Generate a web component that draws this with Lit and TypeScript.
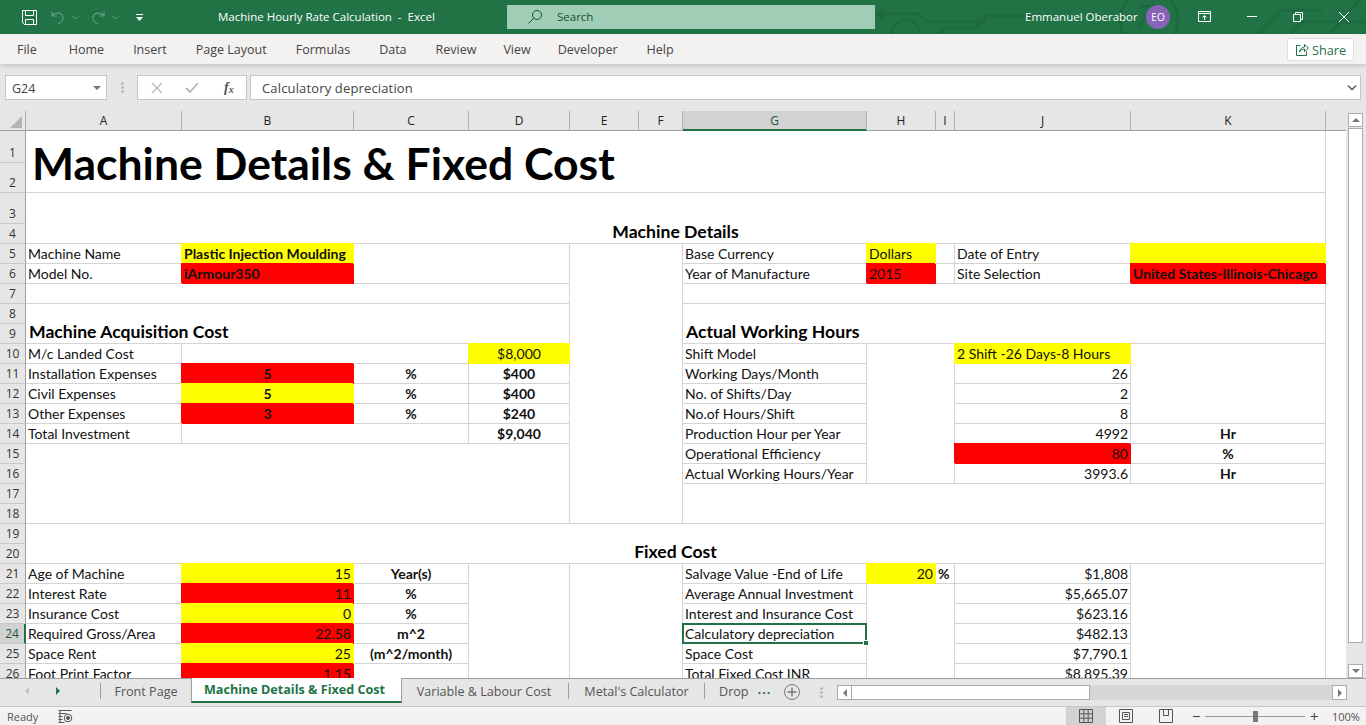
import { LitElement, css, html, svg } from "lit";
import { customElement } from "lit/decorators.js";

const COLS = ["A", "B", "C", "D", "E", "F", "G", "H", "I", "J", "K"];
const COL_W = [156, 172, 115, 101, 69, 44, 184, 69, 19, 176, 195];
const ROW_H = [32, 30, 31, ...Array(23).fill(20)];

type Cell = { at: string; to?: string; text?: string; cls?: string };

// same reading as a spreadsheet: at = top left, to = bottom right of the merge
const CELLS: Cell[] = [
  { at: "A1", to: "K2", text: "Machine Details & Fixed Cost", cls: "title" },
  { at: "A3", to: "K4", text: "Machine Details", cls: "head ctr" },

  { at: "A5", text: "Machine Name" },
  { at: "B5", text: "Plastic Injection Moulding", cls: "b yellow" },
  { at: "A6", text: "Model No." },
  { at: "B6", text: "iArmour350", cls: "b red" },
  { at: "C5", to: "D6" },
  { at: "E5", to: "F18" },
  { at: "A7", to: "D7" },
  { at: "A8", to: "D9", text: "Machine Acquisition Cost", cls: "head ind" },
  { at: "A10", text: "M/c Landed Cost" },
  { at: "B10", to: "C10" },
  { at: "D10", text: "$8,000", cls: "ctr yellow" },
  { at: "A11", text: "Installation Expenses" },
  { at: "B11", text: "5", cls: "b ctr red" },
  { at: "C11", text: "%", cls: "b ctr" },
  { at: "D11", text: "$400", cls: "b ctr" },
  { at: "A12", text: "Civil Expenses" },
  { at: "B12", text: "5", cls: "b ctr yellow" },
  { at: "C12", text: "%", cls: "b ctr" },
  { at: "D12", text: "$400", cls: "b ctr" },
  { at: "A13", text: "Other Expenses" },
  { at: "B13", text: "3", cls: "b ctr red" },
  { at: "C13", text: "%", cls: "b ctr" },
  { at: "D13", text: "$240", cls: "b ctr" },
  { at: "A14", text: "Total Investment" },
  { at: "B14", to: "C14" },
  { at: "D14", text: "$9,040", cls: "b ctr" },
  { at: "A15", to: "D18" },

  { at: "G5", text: "Base Currency" },
  { at: "H5", text: "Dollars", cls: "yellow" },
  { at: "I5" },
  { at: "J5", text: "Date of Entry" },
  { at: "K5", cls: "yellow" },
  { at: "G6", text: "Year of Manufacture" },
  { at: "H6", text: "2015", cls: "red" },
  { at: "I6" },
  { at: "J6", text: "Site Selection" },
  { at: "K6", text: "United States-Illinois-Chicago", cls: "b red" },
  { at: "G7", to: "K7" },
  { at: "G8", to: "K9", text: "Actual Working Hours", cls: "head ind" },
  { at: "G10", text: "Shift Model" },
  { at: "H10", to: "I16" },
  { at: "J10", text: "2 Shift -26 Days-8 Hours", cls: "yellow" },
  { at: "K10", to: "K13" },
  { at: "G11", text: "Working Days/Month" },
  { at: "J11", text: "26", cls: "rgt" },
  { at: "G12", text: "No. of Shifts/Day" },
  { at: "J12", text: "2", cls: "rgt" },
  { at: "G13", text: "No.of Hours/Shift" },
  { at: "J13", text: "8", cls: "rgt" },
  { at: "G14", text: "Production Hour per Year" },
  { at: "J14", text: "4992", cls: "rgt" },
  { at: "K14", text: "Hr", cls: "b ctr" },
  { at: "G15", text: "Operational Efficiency" },
  { at: "J15", text: "80", cls: "rgt red" },
  { at: "K15", text: "%", cls: "b ctr" },
  { at: "G16", text: "Actual Working Hours/Year" },
  { at: "J16", text: "3993.6", cls: "rgt" },
  { at: "K16", text: "Hr", cls: "b ctr" },
  { at: "G17", to: "K18" },

  { at: "A19", to: "K20", text: "Fixed Cost", cls: "head ctr" },
  { at: "A21", text: "Age of Machine" },
  { at: "B21", text: "15", cls: "rgt yellow" },
  { at: "C21", text: "Year(s)", cls: "b ctr" },
  { at: "D21", to: "D26" },
  { at: "E21", to: "F26" },
  { at: "A22", text: "Interest Rate" },
  { at: "B22", text: "11", cls: "rgt red" },
  { at: "C22", text: "%", cls: "b ctr" },
  { at: "A23", text: "Insurance Cost" },
  { at: "B23", text: "0", cls: "rgt yellow" },
  { at: "C23", text: "%", cls: "b ctr" },
  { at: "A24", text: "Required Gross/Area" },
  { at: "B24", text: "22.58", cls: "rgt red" },
  { at: "C24", text: "m^2", cls: "b ctr" },
  { at: "A25", text: "Space Rent" },
  { at: "B25", text: "25", cls: "rgt yellow" },
  { at: "C25", text: "(m^2/month)", cls: "b ctr" },
  { at: "A26", text: "Foot Print Factor" },
  { at: "B26", text: "1.15", cls: "rgt red" },
  { at: "C26" },

  { at: "G21", text: "Salvage Value -End of Life" },
  { at: "H21", text: "20", cls: "rgt yellow" },
  { at: "I21", text: "%", cls: "b" },
  { at: "J21", text: "$1,808", cls: "rgt" },
  { at: "K21", to: "K26" },
  { at: "G22", text: "Average Annual Investment" },
  { at: "H22", to: "I26" },
  { at: "J22", text: "$5,665.07", cls: "rgt" },
  { at: "G23", text: "Interest and Insurance Cost" },
  { at: "J23", text: "$623.16", cls: "rgt" },
  { at: "G24", text: "Calculatory depreciation", cls: "sel" },
  { at: "J24", text: "$482.13", cls: "rgt" },
  { at: "G25", text: "Space Cost" },
  { at: "J25", text: "$7,790.1", cls: "rgt" },
  { at: "G26", text: "Total Fixed Cost INR" },
  { at: "J26", text: "$8,895.39", cls: "rgt" },
];

const TABS = ["File", "Home", "Insert", "Page Layout", "Formulas", "Data", "Review", "View", "Developer", "Help"];

function parse(ref: string) {
  return { col: COLS.indexOf(ref[0]) + 2, row: Number(ref.slice(1)) + 1 };
}

function place(c: Cell) {
  const a = parse(c.at);
  const b = parse(c.to ?? c.at);
  return `grid-area:${a.row}/${a.col}/${b.row + 1}/${b.col + 1}`;
}

const circuit = svg`
  <g fill="none" stroke="#1d6a3f" stroke-width="3">
    <circle cx="1149" cy="20" r="29"/>
    <path d="M1141 6h14v14M1155 6l-16 20"/>
    <path d="M875 14h44l8 8h60M892 34a14 14 0 0 1 28 0M940 34l5-6h30l12-12h50"/>
    <circle cx="882" cy="14" r="3"/>
    <path d="M1258 34l24-24h40M1330 34l30-34M1290 34l12-12h64"/>
  </g>`;

@customElement("app-root")
export class AppRoot extends LitElement {
  render() {
    const gridCols = `26px ${COL_W.map((w) => w + "px").join(" ")} 20px`;
    const gridRows = `20px ${ROW_H.map((h) => h + "px").join(" ")}`;
    return html`
      <header class="titlebar">
        <svg class="circuit" width="1366" height="34" viewBox="0 0 1366 34">${circuit}</svg>
        <div class="qat">
          <svg width="17" height="17" viewBox="0 0 17 17" fill="none" stroke="#fff">
            <path d="M1.500 1.500h14v14h-12l-2-2z"/><path d="M4.500 1.500v5h8v-5M4.500 15.500v-5h8v5"/>
          </svg>
          <svg class="undo" width="16" height="16" viewBox="0 0 16 16" fill="none" stroke="#5d9e7c" stroke-width="1.200">
            <path d="M2 2v5h5M2 7c3-4 10-4 11 1 .6 3-2 6-5 7"/>
          </svg>
          <svg class="chev" width="7" height="5" viewBox="0 0 7 5" fill="none" stroke="#5d9e7c"><path d="M.5 1l3 3 3-3"/></svg>
          <svg class="redo" width="16" height="16" viewBox="0 0 16 16" fill="none" stroke="#5d9e7c" stroke-width="1.200">
            <path d="M14 2v5H9M14 7c-3-4-10-4-11 1-.6 3 2 6 5 7"/>
          </svg>
          <svg class="chev" width="7" height="5" viewBox="0 0 7 5" fill="none" stroke="#5d9e7c"><path d="M.5 1l3 3 3-3"/></svg>
          <svg class="more" width="9" height="9" viewBox="0 0 9 9" fill="#fff">
            <rect x="1" y="1" width="7" height="1"/><path d="M1 4h7L4.500 8z"/>
          </svg>
        </div>
        <div class="doc">Machine Hourly Rate Calculation&nbsp; -&nbsp; Excel</div>
        <div class="search">
          <svg width="16" height="16" viewBox="0 0 16 16" fill="none" stroke="#14532f">
            <circle cx="10" cy="6" r="4.500"/><path d="M6.700 9.300L1.500 14.500"/>
          </svg>
          <span>Search</span>
        </div>
        <div class="user">Emmanuel Oberabor</div>
        <div class="avatar">EO</div>
        <div class="win">
          <svg width="14" height="12" viewBox="0 0 14 12" fill="none" stroke="#fff">
            <path d="M.5 .5h12v10H.5zM.5 2.500h12M6.500 9V4.500M4.500 6.500l2-2 2 2"/>
          </svg>
          <svg width="12" height="12" viewBox="0 0 12 12" stroke="#fff"><path d="M1 5.500h10"/></svg>
          <svg width="12" height="12" viewBox="0 0 12 12" fill="none" stroke="#fff">
            <path d="M1.500 3.500h7v7h-7zM3.500 3.500v-2h7v7h-2"/>
          </svg>
          <svg width="12" height="12" viewBox="0 0 12 12" stroke="#fff"><path d="M1 1l10 10M11 1L1 11"/></svg>
        </div>
      </header>

      <nav class="ribbon">
        ${TABS.map((t) => html`<span>${t}</span>`)}
        <button class="share">
          <svg width="14" height="14" viewBox="0 0 14 14" fill="none" stroke="#217346">
            <path d="M5.500 2.500h-4v10h10v-4M4.500 9c0-3 3-5 5-5V1.500l4 3.500-4 3.500V6c-2 0-4 1-5 3z"/>
          </svg>
          Share
        </button>
      </nav>

      <section class="formula">
        <div class="namebox"><span>G24</span><i class="caret"></i></div>
        <div class="grip"></div>
        <div class="fxbtns">
          <svg width="12" height="12" viewBox="0 0 12 12" stroke="#b4b4b4" stroke-width="1.300"><path d="M1 1l10 10M11 1L1 11"/></svg>
          <svg width="14" height="12" viewBox="0 0 14 12" fill="none" stroke="#b4b4b4" stroke-width="1.800"><path d="M1 6l4 4 8-9"/></svg>
          <span class="fx">f<sub>x</sub></span>
        </div>
        <div class="input">
          <span>Calculatory depreciation</span>
          <svg width="10" height="8" viewBox="0 0 10 8" fill="none" stroke="#6a6a6a" stroke-width="1.600"><path d="M1 1.500l4 4 4-4"/></svg>
        </div>
      </section>

      <section class="sheet">
        <div class="grid" style="grid-template-columns:${gridCols};grid-template-rows:${gridRows}">
          <div class="corner"><i></i></div>
          ${COLS.map((c) => html`<div class="colhead ${c === "G" ? "on" : ""}">${c}</div>`)}
          <div class="colhead end"></div>
          ${ROW_H.map(
            (_, i) => html`<div class="rowhead ${i === 23 ? "on" : ""}" style="grid-area:${i + 2}/1">${i + 1}</div>`
          )}
          ${CELLS.map(
            (c) => html`<div class="cell ${c.cls ?? ""}" style=${place(c)}>${c.text ?? ""}</div>`
          )}
        </div>
        <aside class="vscroll">
          <div class="btn"><i class="up"></i></div>
          <div class="thumb"></div>
          <div class="track"></div>
          <div class="btn"><i class="down"></i></div>
        </aside>
      </section>

      <section class="tabs">
        <div class="arrows">
          <i class="prev"></i>
          <i class="next"></i>
        </div>
        <div class="tab" style="width:91px">Front Page</div>
        <div class="tab active" style="width:211px">Machine Details &amp; Fixed Cost</div>
        <div class="tab" style="width:166px">Variable &amp; Labour Cost</div>
        <div class="tab" style="width:136px">Metal's Calculator</div>
        <div class="tab last">Drop</div>
        <span class="ell">...</span>
        <svg class="add" width="18" height="18" viewBox="0 0 18 18" fill="none" stroke="#777">
          <circle cx="9" cy="9" r="7.500"/><path d="M9 4.500v9M4.500 9h9" stroke-width="1.500"/>
        </svg>
        <div class="grip small"></div>
        <div class="hscroll">
          <div class="btn"><i class="left"></i></div>
          <div class="hthumb"></div>
          <div class="htrack"></div>
          <div class="btn"><i class="right"></i></div>
        </div>
      </section>

      <footer class="status">
        <span class="ready">Ready</span>
        <svg class="macro" width="15" height="13" viewBox="0 0 15 13" fill="none" stroke="#555">
          <path d="M.5 .5h13M.5 3.500h8M.5 6.500h4M.5 9.500h4M.5 12.500h6M2 .5v12"/><circle cx="10" cy="8" r="3.800"/><circle cx="10" cy="8" r="1.500" fill="#555"/>
        </svg>
        <div class="spring"></div>
        <div class="view on">
          <svg width="14" height="14" viewBox="0 0 14 14" fill="none" stroke="#555">
            <path d="M.5 .5h13v13H.5zM.5 4.830h13M.5 9.170h13M4.830 .5v13M9.170 .5v13"/>
          </svg>
        </div>
        <div class="view">
          <svg width="14" height="14" viewBox="0 0 14 14" fill="none" stroke="#555">
            <path d="M.5 .5h13v13H.5zM3.500 3.500h7v7h-7zM5 5.500h4M5 7.500h4"/>
          </svg>
        </div>
        <div class="view">
          <svg width="14" height="14" viewBox="0 0 14 14" fill="none" stroke="#555">
            <path d="M.5 .5h13v13H.5zM4.500 .5v6h5v-6"/>
          </svg>
        </div>
        <div class="zoom">
          <span class="pm">−</span>
          <div class="slider"><i></i></div>
          <span class="pm">+</span>
          <span class="pct">100%</span>
        </div>
      </footer>
    `;
  }

  static styles = css`
    :host {
      display: flex;
      flex-direction: column;
      height: 100vh;
      overflow: hidden;
      font-family: "Open Sans", "Noto Sans", sans-serif;
      background: #e6e6e6;
    }

    .titlebar {
      position: relative;
      height: 34px;
      flex: none;
      display: flex;
      align-items: center;
      background: #217346;
      color: #fff;
      font-size: 11.500px;
    }
    .circuit {
      position: absolute;
      left: 0;
      top: 0;
    }
    .qat {
      position: relative;
      width: 218px;
      flex: none;
      padding-left: 21px;
      box-sizing: border-box;
      display: flex;
      align-items: center;
    }
    .qat .undo {
      margin-left: 12px;
    }
    .qat .redo {
      margin-left: 11px;
    }
    .chev {
      margin-left: 6px;
    }
    .qat .more {
      margin-left: 16px;
    }
    .doc {
      position: relative;
      width: 289px;
      flex: none;
      white-space: nowrap;
      margin-top: -2px;
    }
    .search {
      position: relative;
      width: 368px;
      height: 24px;
      flex: none;
      box-sizing: border-box;
      padding-left: 20px;
      display: flex;
      align-items: center;
      gap: 14px;
      background: #a0cdb5;
      color: #14532f;
    }
    .search span {
      margin-top: -1px;
    }
    .user {
      position: relative;
      margin-left: 150px;
      width: 121px;
      flex: none;
      white-space: nowrap;
      margin-top: -1px;
    }
    .avatar {
      position: relative;
      width: 24px;
      height: 24px;
      flex: none;
      border-radius: 50%;
      background: #8764b8;
      display: grid;
      place-items: center;
      font-size: 10px;
    }
    .win {
      position: relative;
      display: flex;
      align-items: center;
      margin-left: 28px;
      gap: 34px;
    }

    .ribbon {
      height: 30px;
      flex: none;
      display: flex;
      align-items: center;
      gap: 29px;
      padding-left: 17px;
      background: #f3f2f1;
      color: #444;
      font-size: 12.500px;
      box-shadow: 0 2px 4px rgba(0, 0, 0, 0.14);
      position: relative;
      z-index: 1;
    }
    .ribbon span:first-child {
      margin-right: 3px;
    }
    .ribbon span:nth-child(8),
    .ribbon span:nth-child(9) {
      margin-left: -2px;
    }
    .share {
      position: absolute;
      left: 1287px;
      top: 4px;
      width: 67px;
      height: 23px;
      box-sizing: border-box;
      display: flex;
      align-items: center;
      justify-content: center;
      gap: 3px;
      background: #fff;
      border: 1px solid #e1dfdd;
      border-radius: 2px;
      padding: 0;
      color: #217346;
      font: 400 12.700px "Open Sans", sans-serif;
    }

    .formula {
      height: 47px;
      flex: none;
      box-sizing: border-box;
      padding: 11px 5px 11px;
      display: flex;
      background: #e6e6e6;
    }
    .namebox,
    .fxbtns,
    .input {
      box-sizing: border-box;
      height: 25px;
      background: #fff;
      border: 1px solid #c6c6c6;
      display: flex;
      align-items: center;
      color: #444;
      font-size: 13px;
    }
    .namebox span {
      margin-top: 2px;
    }
    .namebox {
      width: 102px;
      padding: 0 5px 0 6px;
      justify-content: space-between;
      font-size: 12.500px;
    }
    .caret {
      border: 4px solid transparent;
      border-top: 4px solid #777;
      border-bottom: 0;
    }
    .grip {
      width: 30px;
      background: radial-gradient(circle, #a6a6a6 1px, transparent 1.300px) center / 3px 4px repeat-y;
      height: 13px;
      margin-top: 6px;
    }
    .grip.small {
      width: 3px;
      margin: 0 14px 0 19px;
    }
    .fxbtns {
      width: 110px;
      padding-left: 13px;
      gap: 22px;
      flex: none;
    }
    .fx {
      font: italic 700 14px "Liberation Serif", serif;
      color: #555;
      margin-left: 3px;
    }
    .fx sub {
      font-size: 10px;
      vertical-align: -1px;
    }
    .input {
      flex: 1;
      margin-left: 3px;
      padding: 0 3px 0 11px;
      justify-content: space-between;
      letter-spacing: 0.150px;
    }

    .sheet {
      flex: 1;
      min-height: 0;
      display: flex;
      background: #fff;
      border-bottom: 1px solid #9f9f9f;
    }
    .grid {
      width: 1346px;
      flex: none;
      display: grid;
      overflow: hidden;
      align-content: start;
      font-family: Lato, "Liberation Sans", sans-serif;
      font-size: 14px;
      color: #111;
    }
    .corner,
    .colhead {
      background: #e6e6e6;
      border-bottom: 1px solid #9f9f9f;
      border-right: 1px solid #b0b0b0;
      display: grid;
      place-items: center;
      color: #222;
      font: 12px "Open Sans", sans-serif;
    }
    .corner {
      position: relative;
    }
    .corner i {
      position: absolute;
      right: 3px;
      bottom: 2px;
      border-style: solid;
      border-width: 0 0 12px 12px;
      border-color: transparent transparent #b4b4b4;
    }
    .colhead.on {
      background: #d2d2d2;
      color: #185a36;
      border-bottom: 2px solid #217346;
    }
    .colhead.end {
      border-right: 0;
    }
    .rowhead {
      background: #e6e6e6;
      border-right: 1px solid #9f9f9f;
      border-bottom: 1px solid #c8c8c8;
      display: flex;
      align-items: flex-end;
      justify-content: center;
      color: #333;
      font: 12px/18px "Open Sans", sans-serif;
    }
    .rowhead.on {
      background: #d2d2d2;
      color: #185a36;
      border-right: 2px solid #217346;
    }
    .cell {
      box-sizing: border-box;
      min-width: 0;
      display: flex;
      align-items: flex-end;
      padding: 0 2px 0 2px;
      border-right: 1px solid #d4d4d4;
      border-bottom: 1px solid #d4d4d4;
      line-height: 18px;
      white-space: nowrap;
    }
    .b {
      font-weight: 700;
    }
    .ctr {
      justify-content: center;
    }
    .rgt {
      justify-content: flex-end;
    }
    .yellow {
      background: #ff0;
      border-color: #ff0;
      box-shadow: -1px -1px 0 #ff0;
    }
    .red {
      background: #f00;
      border-color: #f00;
      box-shadow: -1px -1px 0 #f00;
    }
    .title {
      align-items: center;
      padding: 2px 0 0 6px;
      font-size: 44.500px;
      font-weight: 700;
      color: #000;
    }
    .head {
      font-size: 17.600px;
      font-weight: 700;
      line-height: 22px;
      color: #000;
    }
    .ind {
      padding-left: 3px;
    }
    .sel {
      position: relative;
    }
    .sel::before {
      content: "";
      position: absolute;
      inset: -1px;
      border: 2px solid #217346;
    }
    .sel::after {
      content: "";
      position: absolute;
      right: -3px;
      bottom: -3px;
      box-sizing: border-box;
      width: 6px;
      height: 6px;
      background: #217346;
      border: 1px solid #fff;
    }

    .vscroll {
      flex: 1;
      display: flex;
      flex-direction: column;
      gap: 1px;
      background: #e6e6e6;
      padding: 2px 3px 0 2px;
      box-sizing: border-box;
    }
    .vscroll .btn {
      height: 14px;
      flex: none;
    }
    .btn {
      box-sizing: border-box;
      background: #fff;
      border: 1px solid #ababab;
      display: grid;
      place-items: center;
    }
    .btn i {
      display: block;
      border: 4px solid transparent;
    }
    .up {
      border-bottom: 4px solid #777 !important;
      border-top: 0 !important;
    }
    .down {
      border-top: 4px solid #777 !important;
      border-bottom: 0 !important;
    }
    .left {
      border-right: 4px solid #777 !important;
      border-left: 0 !important;
    }
    .right {
      border-left: 4px solid #777 !important;
      border-right: 0 !important;
    }
    .thumb {
      height: 515px;
      flex: none;
      box-sizing: border-box;
      background: #fff;
      border: 1px solid #ababab;
    }
    .track {
      flex: 1;
    }

    .tabs {
      height: 27px;
      flex: none;
      display: flex;
      align-items: flex-start;
      background: #e6e6e6;
      color: #555;
      font-size: 12.600px;
    }
    .arrows {
      width: 100px;
      flex: none;
      height: 24px;
      position: relative;
    }
    .arrows i {
      position: absolute;
      top: 8px;
      border: 4px solid transparent;
    }
    .prev {
      left: 25px;
      border-right-color: #c4c4c4 !important;
      border-left: 0 !important;
    }
    .next {
      left: 56px;
      border-left-color: #217346 !important;
      border-right: 0 !important;
    }
    .tab {
      box-sizing: border-box;
      height: 16px;
      margin-top: 4px;
      flex: none;
      display: flex;
      align-items: center;
      justify-content: center;
      border-left: 1px solid #9f9f9f;
      white-space: nowrap;
    }
    .tab.active {
      height: 25px;
      margin-top: -1px;
      background: #fff;
      color: #217346;
      font-weight: 700;
      border-left: 1px solid #9f9f9f;
      border-right: 1px solid #9f9f9f;
      border-bottom: 2px solid #217346;
      padding: 0 4px 1px 0;
    }
    .tab.active + .tab {
      border-left: 0;
      padding-right: 2px;
    }
    .tab.last {
      padding-left: 14px;
    }
    .ell {
      margin: 2px 12px 0 9px;
      color: #217346;
      font-weight: 700;
      line-height: 18px;
      letter-spacing: 1px;
    }
    .add {
      margin-top: 4px;
      flex: none;
    }
    .tabs .grip.small {
      margin-top: 7px;
    }
    .hscroll {
      margin-top: 6px;
      width: 510px;
      height: 15px;
      flex: none;
      display: flex;
      background: #d6d6d6;
    }
    .hscroll .btn {
      width: 15px;
      flex: none;
    }
    .hthumb {
      width: 238px;
      flex: none;
      background: #fff;
      border: 1px solid #ababab;
      border-left: 0;
      box-sizing: border-box;
    }
    .htrack {
      flex: 1;
    }

    .status {
      height: 19px;
      flex: none;
      display: flex;
      align-items: center;
      background: #f3f2f1;
      border-top: 1px solid #c8c8c8;
      box-sizing: border-box;
      color: #555;
      font-size: 11px;
    }
    .ready {
      margin-left: 7px;
      padding-top: 1px;
    }
    .macro {
      margin-left: 20px;
    }
    .spring {
      flex: 1;
    }
    .view {
      width: 40px;
      height: 100%;
      display: grid;
      place-items: center;
    }
    .view.on {
      background: #d2d2d2;
    }
    .zoom {
      display: flex;
      align-items: center;
      margin-left: 6px;
      margin-right: 8px;
    }
    .pm {
      width: 7px;
      display: grid;
      place-items: center;
      font-size: 15px;
      line-height: 15px;
      color: #444;
    }
    .slider {
      position: relative;
      width: 100px;
      height: 1px;
      margin: 0 5px 0 6px;
      background: #9a9a9a;
    }
    .slider i {
      position: absolute;
      left: 48px;
      top: -5px;
      width: 5px;
      height: 11px;
      background: #777;
    }
    .pct {
      width: 26px;
      margin-left: 15px;
      white-space: nowrap;
    }
  `;
}
